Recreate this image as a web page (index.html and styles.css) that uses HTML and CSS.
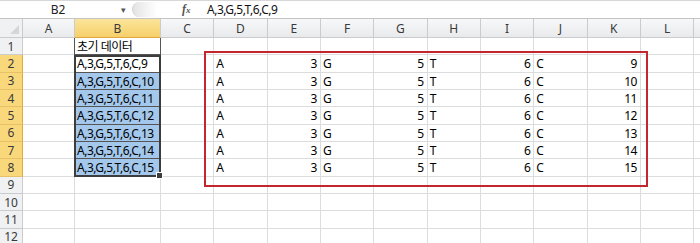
FILE: index.html
```html
<!DOCTYPE html>
<html lang="ko">
<head>
  <meta charset="UTF-8">
  <meta name="viewport" content="width=device-width, initial-scale=1.0">
  <title>Sheet</title>
  <link rel="stylesheet" href="styles.css">
</head>
<body>
  <div class="formula-bar">
    <div class="name-box">B2</div>
    <div class="name-arrow">&#9662;</div>
    <div class="grip"></div>
    <div class="fx">f<span>x</span></div>
    <div class="formula">A,3,G,5,T,6,C,9</div>
  </div>

  <div class="sheet" id="sheet">
    <div class="selection"><span class="handle"></span></div>
    <div class="red-box"></div>
  </div>

  <script>
    // last column (M) only peeks in at the right edge, so no label
    const cols = ['A', 'B', 'C', 'D', 'E', 'F', 'G', 'H', 'I', 'J', 'K', 'L', ''];
    const rowCount = 12;
    const sheet = document.getElementById('sheet');

    // row 2..8 : split result of "A,3,G,5,T,6,C,n"
    function rowData(r) {
      const data = {};
      if (r === 1) data.B = { text: '초기 데이터' };
      if (r >= 2 && r <= 8) {
        const n = r + 7;
        data.B = { text: 'A,3,G,5,T,6,C,' + n };
        data.D = { text: 'A' };
        data.E = { text: '3', num: true };
        data.F = { text: 'G' };
        data.G = { text: '5', num: true };
        data.H = { text: 'T' };
        data.I = { text: '6', num: true };
        data.J = { text: 'C' };
        data.K = { text: n, num: true };
      }
      return data;
    }

    function addCell(cls, text) {
      const cell = document.createElement('div');
      cell.className = cls;
      if (text !== undefined) cell.textContent = text;
      sheet.appendChild(cell);
      return cell;
    }

    addCell('corner');
    cols.forEach(c => addCell(c === 'B' ? 'col-head active' : 'col-head', c));

    for (let r = 1; r <= rowCount; r++) {
      const picked = r >= 2 && r <= 8;
      addCell(picked ? 'row-head active' : 'row-head', r);
      const data = rowData(r);
      cols.forEach(c => {
        let cls = 'cell';
        const d = data[c];
        if (d && d.num) cls += ' num';
        if (c === 'B' && r <= 8) cls += ' boxed';
        if (c === 'B' && r >= 3 && r <= 8) cls += ' picked';
        addCell(cls, d ? d.text : '');
      });
    }
  </script>
</body>
</html>
```

FILE: styles.css
```css
body {
  margin: 0;
  overflow: hidden;
  background: #ffffff;
  font-family: "Noto Sans", "Noto Sans CJK KR", sans-serif;
  font-size: 12px;
  color: #000;
}

.formula-bar {
  display: flex;
  align-items: center;
  height: 17px;
  border-top: 1px solid #d8d8d8;
  border-bottom: 1px solid #c4c4c4;
  background: #ffffff;
}

.name-box {
  width: 116px;
  text-align: center;
  font-size: 12px;
  color: #222;
}

.name-arrow {
  width: 14px;
  font-size: 9px;
  color: #555;
  text-align: center;
}

.grip {
  width: 24px;
  height: 15px;
  margin-left: 2px;
  border-radius: 8px 0 0 8px;
  background: linear-gradient(to right, #e3e3e3, #f4f4f4 60%, #ffffff);
  border-left: 1px solid #d0d0d0;
}

.fx {
  margin-left: 25px;
  width: 25px;
  font-family: "Liberation Serif", serif;
  font-style: italic;
  font-weight: bold;
  font-size: 12px;
  color: #555;
}

.fx span {
  font-size: 9px;
}

.formula {
  color: #111;
  letter-spacing: -0.5px;
}

.sheet {
  position: relative;
  display: grid;
  grid-template-columns: 23px 52px 86px repeat(10, 53.33px) 7px;
  grid-template-rows: 19px repeat(12, 17.33px);
  width: 700px;
  overflow: hidden;
}

.corner,
.col-head,
.row-head {
  box-sizing: border-box;
  background: #f0f1f3;
  color: #3a3a3a;
  border-right: 1px solid #c9cbce;
  border-bottom: 1px solid #c9cbce;
  display: flex;
  align-items: center;
  justify-content: center;
  font-size: 12px;
}

.corner {
  position: relative;
}

.corner::after {
  content: "";
  position: absolute;
  right: 3px;
  bottom: 3px;
  border-left: 9px solid transparent;
  border-bottom: 9px solid #d5d6d8;
}

.col-head {
  background: linear-gradient(#f7f8f9, #e9eaec);
}

.col-head.active {
  background: linear-gradient(#fbe59a, #f6cf6a);
  border-bottom: 1px solid #e3a83c;
}

.row-head.active {
  background: #f9d87c;
  border-right: 1px solid #e3a83c;
  border-bottom: 1px solid #e8c068;
}

.cell {
  box-sizing: border-box;
  border-right: 1px solid #dadcdd;
  border-bottom: 1px solid #dadcdd;
  padding: 1px 2px 0;
  line-height: 16px;
  letter-spacing: -0.5px;
  white-space: nowrap;
}

.cell.num {
  text-align: right;
  padding-right: 3px;
}

.cell.boxed {
  border-left: 1px solid #555;
  border-right: 1px solid #555;
  border-bottom: 1px solid #555;
  margin-left: -1px;
}

.cell.picked {
  background: #a3c8ec;
}

.selection {
  position: absolute;
  left: 74px;
  top: 36px;
  width: 87px;
  height: 122px;
  border: 2px solid #3d3d3d;
  box-sizing: border-box;
  pointer-events: none;
  z-index: 2;
}

.handle {
  position: absolute;
  right: -4px;
  bottom: -4px;
  width: 5px;
  height: 5px;
  background: #3d3d3d;
  border: 1px solid #fff;
}

.red-box {
  position: absolute;
  left: 204px;
  top: 32px;
  width: 444px;
  height: 136px;
  border: 2px solid #c3262f;
  box-sizing: border-box;
  z-index: 2;
}
```
